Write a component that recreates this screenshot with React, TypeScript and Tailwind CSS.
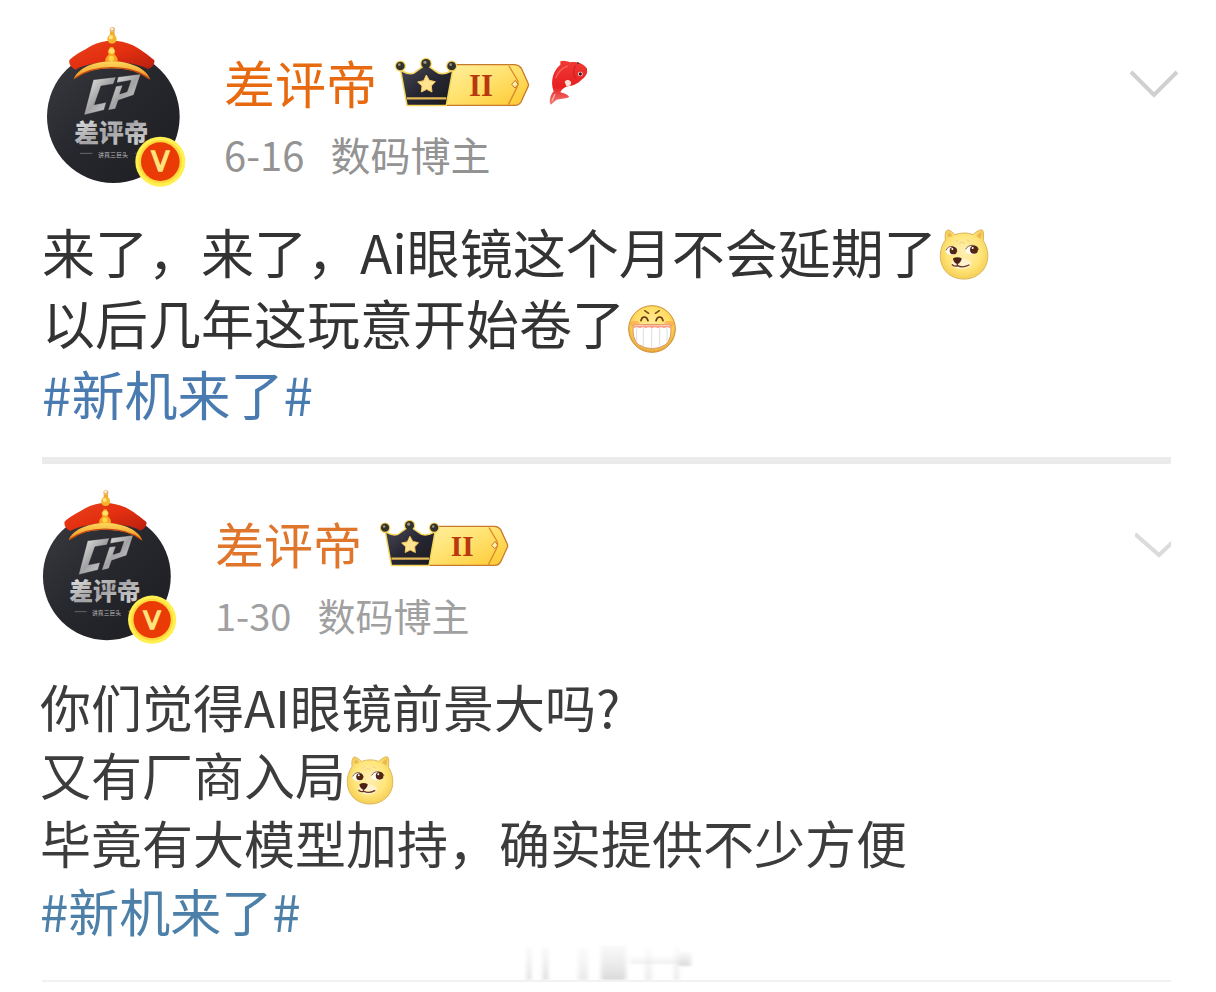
import React from "react";

const Avatar = ({ id, className }: { id: string; className: string }) => (
  <svg viewBox="36 30 432 492" className={className} role="img" aria-label="差评帝">
    <defs>
      <linearGradient id={`${id}-disc`} x1="0" y1="0" x2="1" y2="1">
        <stop offset="0" stopColor="#3a3b40" />
        <stop offset="0.5" stopColor="#26272c" />
        <stop offset="1" stopColor="#1d1d22" />
      </linearGradient>
      <linearGradient id={`${id}-steel`} x1="0" y1="0" x2="1" y2="1">
        <stop offset="0" stopColor="#f2f2f2" />
        <stop offset="0.5" stopColor="#a2a2a4" />
        <stop offset="1" stopColor="#dededf" />
      </linearGradient>
      <linearGradient id={`${id}-hat`} x1="0" y1="0" x2="1" y2="1">
        <stop offset="0" stopColor="#e9431c" />
        <stop offset="0.5" stopColor="#e32f10" />
        <stop offset="1" stopColor="#b81f10" />
      </linearGradient>
      <linearGradient id={`${id}-gold`} x1="0" y1="0" x2="0" y2="1">
        <stop offset="0" stopColor="#ffd95c" />
        <stop offset="1" stopColor="#f08a1c" />
      </linearGradient>
    </defs>
    <circle cx="250" cy="305" r="199" fill={`url(#${id}-disc)`} />

    {/* monogram */}
    <g fill={`url(#${id}-steel)`} stroke="#111" strokeWidth="1">
      <path d="M190 194 L258 186 L250 207 L213 213 L193 269 L229 262 L222 285 L162 300 Z" />
      <path d="M264 186 L332 177 L311 240 L265 256 L256 281 L234 286 L258 214 L278 211 L269 237 L291 230 L303 196 L260 203 Z" />
    </g>
    <text
      x="244"
      y="380"
      textAnchor="middle"
      fontSize="74"
      fontWeight="900"
      fill={`url(#${id}-steel)`}
      className="font-['Noto_Sans_CJK_SC',sans-serif]"
    >
      差评帝
    </text>
    <path d="M150 415 H187 M316 415 H340" stroke="#8b8b8d" strokeWidth="2" />
    <text
      x="249"
      y="425"
      textAnchor="middle"
      fontSize="18"
      fill="#b9b9bb"
      className="font-['Noto_Sans_CJK_SC',sans-serif]"
    >
      讲真三巨头
    </text>

    {/* hat */}
    <path
      d="M246 76 C226 78 204 82 184 92 C158 108 128 122 118 136 C116 148 124 158 136 164 C190 134 300 134 354 162 C368 158 375 146 373 136 C352 118 325 98 307 90 C288 82 266 78 246 76 Z"
      fill={`url(#${id}-hat)`}
    />
    <path d="M131 193 C140 165 180 141 244 138 C306 140 350 162 361 194 C334 171 294 160 244 160 C197 160 156 171 131 193 Z" fill={`url(#${id}-gold)`} />
    <path d="M134 190 C170 164 208 158 244 158 C286 158 328 168 358 191" fill="none" stroke="#c64a12" strokeWidth="4" />
    <path d="M226 139 C226 126 232 124 236 118 L233 109 L241 96 L249 96 L256 109 L253 118 C260 124 264 130 263 139 Z" fill="#f8a51d" />
    <circle cx="245" cy="108" r="8" fill="#ffe071" />
    <circle cx="244" cy="130" r="8" fill="#ffd34d" />
    <path d="M237 82 L241 46 Q247 32 253 46 L256 82 Z" fill="#efaa28" />
    <circle cx="246" cy="72" r="14" fill="#f6b52b" />
    <circle cx="243" cy="67" r="6" fill="#ffe88e" />
    <circle cx="247" cy="44" r="8" fill="#e8b775" />
    <circle cx="246" cy="42" r="4" fill="#fff5d8" />

    {/* verified mark */}
    <circle cx="391" cy="440" r="75" fill="#fff04f" />
    <circle cx="391" cy="440" r="65" fill="#ffd93c" />
    <circle cx="391" cy="440" r="58" fill="#ea3a05" />
    <text
      x="391"
      y="469"
      textAnchor="middle"
      fontSize="78"
      fill="#ffe37d"
      stroke="#ffe37d"
      strokeWidth="5"
      className="font-['DejaVu_Sans',sans-serif]"
    >
      V
    </text>
  </svg>
);

const CrownBadge = ({ id, className }: { id: string; className: string }) => (
  <svg viewBox="36 30 420 156" className={className} role="img" aria-label="II">
    <defs>
      <linearGradient id={`${id}-bar`} x1="0" y1="0" x2="1" y2="1">
        <stop offset="0" stopColor="#fff0a0" />
        <stop offset="0.5" stopColor="#ffe06a" />
        <stop offset="1" stopColor="#fdc82f" />
      </linearGradient>
      <linearGradient id={`${id}-crown`} x1="0" y1="0" x2="1" y2="1">
        <stop offset="0" stopColor="#4a4a55" />
        <stop offset="0.5" stopColor="#262733" />
        <stop offset="1" stopColor="#1c1a1f" />
      </linearGradient>
    </defs>
    <path d="M214 56 H402 Q414 57 421 67 L441 111 Q444 117 441 122 L420 168 Q414 178 402 178 H190 Z" fill={`url(#${id}-bar)`} stroke="#c77a2b" strokeWidth="4" />
    <path d="M384 60 L410 104 Q413 115 408 124 L382 176" fill="none" stroke="#d98a2c" strokeWidth="4" />
    <path d="M403 103 L411 115 L402 126 L392 115 Z" fill="#fff0a4" stroke="#cc702a" strokeWidth="3" />
    <text
      x="300"
      y="149"
      textAnchor="middle"
      fontSize="92"
      fontWeight="700"
      fill="#b8390f"
      className="font-['Liberation_Serif',serif]"
    >
      II
    </text>
    <g stroke="#f5d65a" strokeWidth="9" strokeLinejoin="round">
      <path d="M62 77 Q92 94 108 77 L135 58 L162 77 Q180 94 212 77 L194 176 H80 Z" />
      <circle cx="58" cy="60" r="12" />
      <circle cx="135" cy="53" r="13" />
      <circle cx="212" cy="60" r="12" />
    </g>
    <path d="M62 77 Q92 94 108 77 L135 58 L162 77 Q180 94 212 77 L194 176 H80 Z" fill={`url(#${id}-crown)`} />
    <g fill="#33322c">
      <circle cx="58" cy="60" r="13" />
      <circle cx="135" cy="53" r="14" />
      <circle cx="212" cy="60" r="13" />
    </g>
    <g fill="#99947f">
      <circle cx="55" cy="56" r="4" />
      <circle cx="132" cy="49" r="5" />
      <circle cx="209" cy="56" r="4" />
    </g>
    <path d="M78 157 H196" stroke="#e6b957" strokeWidth="7" />
    <path d="M136 87 L145 103 L163 107 L151 120 L153 138 L137 130 L121 138 L123 120 L110 108 L128 104 Z" fill="#ffe38e" stroke="#f4c55d" strokeWidth="3" strokeLinejoin="round" />
  </svg>
);

const Fish = () => (
  <svg viewBox="500 40 126 144" className="h-12 w-[42px]" role="img" aria-label="锦鲤">
    <defs>
      <linearGradient id="koi" x1="0" y1="0" x2="0" y2="1">
        <stop offset="0" stopColor="#f03a34" />
        <stop offset="0.6" stopColor="#e71f22" />
        <stop offset="1" stopColor="#f28379" />
      </linearGradient>
    </defs>
    <path
      d="M540 50 C550 46 560 50 570 53 C590 50 612 58 619 72 C624 84 616 96 606 103 C596 114 584 122 566 124 C554 126 544 133 540 143 C550 146 560 148 567 157 C553 164 538 162 528 166 C521 170 517 178 511 180 C505 170 510 152 520 140 C514 126 514 108 518 94 C522 80 530 68 540 60 Z"
      fill="url(#koi)"
    />
    <path d="M553 112 C558 104 566 104 572 112 C574 120 568 126 558 124 Z" fill="#ffe0d2" />
    <path d="M586 62 C578 74 578 90 587 102" fill="none" stroke="#c81b1d" strokeWidth="3" />
    <path d="M526 100 C532 84 544 70 562 64" fill="none" stroke="#f6615a" strokeWidth="4" />
    <path d="M515 168 L524 148" fill="none" stroke="#fbb5a7" strokeWidth="4" />
    <path d="M590 54 L597 57" stroke="#50302e" strokeWidth="4" />
    <circle cx="600" cy="88" r="7" fill="#fff" />
    <circle cx="600" cy="88" r="5" fill="#3b1a1d" />
    <circle cx="618" cy="73" r="2" fill="#7d2729" />
  </svg>
);

const Doge = ({ id, className }: { id: string; className: string }) => (
  <svg viewBox="54 50 150 156" className={className} role="img" aria-label="doge">
    <defs>
      <radialGradient id={id} cx="0.5" cy="0.45" r="0.55">
        <stop offset="0" stopColor="#fff0b5" />
        <stop offset="0.65" stopColor="#ffe579" />
        <stop offset="1" stopColor="#f5cf57" />
      </radialGradient>
    </defs>
    <path
      d="M73 86 C71 70 74 56 81 56 C89 57 96 64 102 70 C120 64 140 63 156 70 C166 60 178 54 184 56 C190 62 187 78 187 88 C208 121 204 164 177 186 C150 210 105 208 80 186 C53 162 51 117 73 86 Z"
      fill={`url(#${id})`}
      stroke="#d9b65c"
      strokeWidth="3"
    />
    <path d="M80 78 Q80 65 84 63 Q90 66 95 74 M166 74 Q174 64 181 63 Q183 72 180 83" fill="#eaba51" />
    <ellipse cx="121" cy="157" rx="30" ry="16" fill="#fff3cf" />
    <path d="M114 98 Q123 87 132 98 M105 92 L112 85 M137 85 L147 91" fill="none" stroke="#f0cf85" strokeWidth="3" />
    <ellipse cx="91" cy="117" rx="17" ry="14" fill="#fffdf4" />
    <ellipse cx="152" cy="115" rx="19" ry="14" fill="#fffdf4" />
    <path d="M75 117 Q80 104 96 105 Q106 110 108 120 M134 114 Q140 101 157 102 Q170 105 173 115" fill="none" stroke="#785128" strokeWidth="3" />
    <circle cx="97" cy="118" r="11" fill="#512615" />
    <circle cx="159" cy="115" r="12" fill="#512615" />
    <circle cx="94" cy="113" r="3" fill="#fff" />
    <circle cx="155" cy="110" r="3" fill="#fff" />
    <path d="M96 141 Q109 134 122 141 Q121 153 109 159 Q97 154 96 141 Z" fill="#4b2116" />
    <path d="M109 157 V164 M94 160 Q101 167 110 163 Q124 171 144 161" fill="none" stroke="#6b321f" strokeWidth="4" strokeLinecap="round" />
  </svg>
);

const Grin = ({ className }: { className: string }) => (
  <svg viewBox="50 44 150 150" className={className} role="img" aria-label="嘻嘻">
    <defs>
      <radialGradient id="grin" cx="0.5" cy="0.4" r="0.6">
        <stop offset="0" stopColor="#ffec9b" />
        <stop offset="0.65" stopColor="#ffdc62" />
        <stop offset="1" stopColor="#e8a637" />
      </radialGradient>
    </defs>
    <circle cx="125" cy="119" r="70" fill="url(#grin)" stroke="#ce8c30" strokeWidth="3" />
    <ellipse cx="74" cy="104" rx="14" ry="9" fill="#ff8f4c" opacity="0.5" />
    <ellipse cx="176" cy="104" rx="14" ry="9" fill="#ff8f4c" opacity="0.5" />
    <path d="M103 64 L115 72 M147 64 L135 72" stroke="#74411a" strokeWidth="4" strokeLinecap="round" />
    <path d="M92 94 Q94 83 102 83 Q110 83 113 94 M137 94 Q140 83 148 83 Q156 83 158 94" fill="none" stroke="#653510" strokeWidth="5" strokeLinecap="round" />
    <path d="M69 107 Q125 103 181 107 Q186 148 166 166 Q126 190 84 166 Q64 148 69 107 Z" fill="#fff" stroke="#d99762" strokeWidth="3" />
    <path d="M71 110 Q125 105 179 110 V116 Q170 111 161 117 Q152 111 143 117 Q134 111 125 117 Q116 111 106 117 Q98 111 89 117 Q80 111 71 116 Z" fill="#ff9d87" />
    <path d="M79 117 V155 M99 117 V170 M124 117 V177 M148 117 V171 M170 117 V155" stroke="#c9cbd0" strokeWidth="2" />
  </svg>
);

const Watermark = () => (
  <svg viewBox="0 0 220 36" className="h-9 w-[220px]" aria-hidden="true">
    <defs>
      <filter id="haze">
        <feGaussianBlur stdDeviation="2 1" />
      </filter>
      <linearGradient id="fade" x1="0" y1="0" x2="0" y2="1">
        <stop offset="0" stopColor="#eee" stopOpacity="0.4" />
        <stop offset="1" stopColor="#d9d9d9" />
      </linearGradient>
    </defs>
    <g fill="url(#fade)" filter="url(#haze)">
      <path d="M30 3 H34 V36 H30 Z" />
      <path d="M46 3 H51 V36 H46 Z" />
      <path d="M81 4 H91 V36 H81 Z" opacity="0.6" />
      <path d="M104 2 H129 V36 H104 Z" />
      <path d="M148 3 H155 V36 H148 Z" opacity="0.5" />
      <path d="M177 3 H182 V36 H177 Z" opacity="0.6" />
      <path d="M133 12 H192 V20 H133 Z" opacity="0.4" />
      <path d="M182 8 H194 V22 H182 Z" />
    </g>
  </svg>
);

const App = () => {
  return (
    <main className="bg-white pt-[25px] pr-[45px] pl-[42px] font-['Noto_Sans_CJK_SC',sans-serif] text-[#333]">
      <article>
        <header className="flex items-start">
          <Avatar id="june" className="h-[164px] w-36 shrink-0" />
          <div className="ml-[38px] pt-[27px]">
            <div className="flex items-center">
              <h2 className="text-[51px] leading-[60px] text-[#e86a10]">差评帝</h2>
              <CrownBadge id="june-rank" className="ml-4 h-[52px] w-[140px]" />
              <span className="ml-[14px]">
                <Fish />
              </span>
            </div>
            <p className="mt-[18px] flex gap-[26px] text-[40px] leading-[48px] text-[#939393]">
              <time>6-16</time>
              <span>数码博主</span>
            </p>
          </div>
          <button type="button" aria-label="更多" className="mt-11 -mr-2 ml-auto">
            <svg viewBox="0 0 50 30" className="h-[30px] w-[50px]">
              <path d="M2 3 L25 26 L48 3" fill="none" stroke="#d0d0d0" strokeWidth="4" />
            </svg>
          </button>
        </header>
        <div className="mt-[27px] text-[53px] leading-[71px]">
          <p className="flex items-center">
            来了，来了，Ai眼镜这个月不会延期了
            <Doge id="doge-june" className="mt-1 ml-0.5 h-[52px] w-[50px]" />
          </p>
          <p className="flex items-center">
            以后几年这玩意开始卷了
            <Grin className="mt-3 ml-0.5 h-[50px] w-[50px]" />
          </p>
          <p>
            <a href="#topic" className="text-[#4a7bb0]">#新机来了#</a>
          </p>
        </div>
      </article>

      <hr className="mt-7 h-[7px] border-0 bg-[#ebebeb]" />

      <article className="mt-6">
        <header className="flex items-start">
          <Avatar id="january" className="-ml-1 h-[158px] w-[139px] shrink-0" />
          <div className="ml-[38px] pt-[25px]">
            <div className="flex items-center">
              <h2 className="text-[49px] leading-[60px] text-[#e0762c]">差评帝</h2>
              <CrownBadge id="january-rank" className="ml-4 h-[50px] w-[134px]" />
            </div>
            <p className="mt-[18px] flex gap-[26px] text-[38px] leading-[48px] text-[#a0a0a0]">
              <time>1-30</time>
              <span>数码博主</span>
            </p>
          </div>
          <button type="button" aria-label="更多" className="mt-11 ml-auto">
            <svg viewBox="0 0 36 28" className="h-7 w-9">
              <path d="M0 2 L24 23 L40 8" fill="none" stroke="#dcdada" strokeWidth="4" />
            </svg>
          </button>
        </header>
        <div className="mt-[26px] -ml-0.5 text-[51px] leading-[68px] text-[#3c3c3c]">
          <p>你们觉得AI眼镜前景大吗?</p>
          <p className="flex items-center">
            又有厂商入局
            <Doge id="doge-january" className="mt-3 h-[50px] w-12" />
          </p>
          <p>毕竟有大模型加持，确实提供不少方便</p>
          <p>
            <a href="#topic" className="text-[#4d80a8]">#新机来了#</a>
          </p>
        </div>
      </article>

      <footer className="flex justify-center border-b-2 border-[#f2f2f2]">
        <Watermark />
      </footer>
    </main>
  );
};

export default App;
